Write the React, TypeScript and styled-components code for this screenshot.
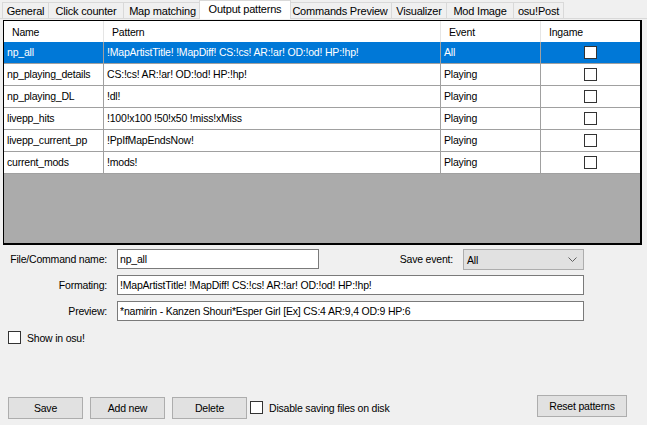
import React from 'react';
import styled, { createGlobalStyle } from 'styled-components';

const FONT = `font-family: "Liberation Sans", Arial, sans-serif; font-size: 10.5px; letter-spacing: -0.2px;`;

const Global = createGlobalStyle`
  html, body { margin: 0; padding: 0; background: #f0f0f0; }
  body { ${FONT} color: #000; }
  * { box-sizing: border-box; }
`;

const Window = styled.div`
  width: 647px;
  height: 425px;
  overflow: hidden;
  background: #f0f0f0;
  display: flex;
  flex-direction: column;
`;

const TabStrip = styled.div`
  display: flex;
  align-items: flex-end;
  height: 19px;
  padding-left: 3px;
  border-bottom: 1px solid #d9d9d9;
  flex: none;
`;

const Tab = styled.div<{ $w: number; $active?: boolean }>`
  position: relative;
  width: ${(p) => p.$w}px;
  height: ${(p) => (p.$active ? 19 : 16)}px;
  margin: ${(p) => (p.$active ? '0 -2px -1px -3px' : '0 0 0 -1px')};
  z-index: ${(p) => (p.$active ? 1 : 0)};
  border: 1px solid #d9d9d9;
  border-bottom: none;
  background: ${(p) => (p.$active ? '#ffffff' : '#f0f0f0')};
  display: flex;
  align-items: center;
  justify-content: center;
  padding-bottom: ${(p) => (p.$active ? 2 : 0)}px;
  font-size: 11px;
  white-space: nowrap;
`;

const Grid = styled.div`
  margin: 1px 0 0 3px;
  width: 639px;
  height: 225px;
  flex: none;
  border-top: 1px solid #000;
  border-left: 1px solid #000;
  border-right: 2px solid #000;
  border-bottom: 2px solid #000;
  background: #ababab;
  overflow: hidden;
`;

const COLS = '100px 337px 100px 99px';

const HeaderRow = styled.div`
  display: grid;
  grid-template-columns: ${COLS};
  height: 21px;
  background: #fff;
`;

const HeaderCell = styled.div<{ $last?: boolean }>`
  display: flex;
  align-items: center;
  padding-left: 8px;
  border-right: ${(p) => (p.$last ? 'none' : '1px solid #e5e5e5')};
`;

const Row = styled.div<{ $selected?: boolean }>`
  display: grid;
  grid-template-columns: ${COLS};
  height: 22px;
  background: ${(p) => (p.$selected ? '#0078d7' : '#fff')};
  color: ${(p) => (p.$selected ? '#fff' : '#000')};
`;

const Cell = styled.div<{ $last?: boolean; $center?: boolean }>`
  display: flex;
  align-items: center;
  justify-content: ${(p) => (p.$center ? 'center' : 'flex-start')};
  padding-left: ${(p) => (p.$center ? 0 : 3)}px;
  padding-bottom: 1px;
  border-bottom: 1px solid #a0a0a0;
  border-right: ${(p) => (p.$last ? 'none' : '1px solid #a0a0a0')};
  white-space: nowrap;
  overflow: hidden;
`;

const CheckBox = styled.span`
  display: inline-block;
  width: 13px;
  height: 13px;
  border: 1px solid #333;
  background: #fff;
  flex: none;
`;

const Form = styled.div`
  flex: 1;
  display: flex;
  flex-direction: column;
  padding: 4px 0 6px 3px;
`;

const FieldRow = styled.div<{ $top: number }>`
  display: flex;
  align-items: flex-start;
  height: 20px;
  margin-top: ${(p) => p.$top}px;
`;

const Label = styled.label<{ $w: number; $gap: number }>`
  width: ${(p) => p.$w}px;
  margin-right: ${(p) => p.$gap}px;
  height: 20px;
  line-height: 20px;
  text-align: right;
  white-space: nowrap;
  flex: none;
`;

const TextBox = styled.input<{ $w: number }>`
  width: ${(p) => p.$w}px;
  height: 20px;
  border: 1px solid #7a7a7a;
  background: #fff;
  padding: 0 2px;
  margin: 0;
  ${FONT}
  color: #000;
  outline: none;
  flex: none;
`;

const Select = styled.div`
  width: 121px;
  height: 21px;
  border: 1px solid #adadad;
  background: #e1e1e1;
  display: flex;
  align-items: center;
  justify-content: space-between;
  padding: 0 6px 0 3px;
  flex: none;
`;

const CheckRow = styled.div<{ $top: number; $left: number }>`
  display: flex;
  align-items: center;
  gap: 6px;
  margin-top: ${(p) => p.$top}px;
  margin-left: ${(p) => p.$left}px;
  height: 13px;
  white-space: nowrap;
`;

const ButtonBar = styled.div`
  margin-top: auto;
  display: flex;
  align-items: flex-start;
  padding-left: 5px;
  padding-right: 20px;
  gap: 7px;
`;

const Button = styled.button<{ $w: number; $raise?: number }>`
  width: ${(p) => p.$w}px;
  height: 22px;
  margin: ${(p) => -(p.$raise || 0)}px 0 0 0;
  padding: 0;
  border: 1px solid #adadad;
  background: #e1e1e1;
  ${FONT}
  color: #000;
  flex: none;
`;

const Spacer = styled.div`
  flex: 1;
`;

const Chevron = () => (
  <svg width="9" height="5" viewBox="0 0 9 5">
    <polyline points="0.5,0.5 4.5,4.5 8.5,0.5" fill="none" stroke="#606060" strokeWidth="1" />
  </svg>
);

const tabs: { name: string; w: number; active?: boolean }[] = [
  { name: 'General', w: 47 },
  { name: 'Click counter', w: 76 },
  { name: 'Map matching', w: 79 },
  { name: 'Output patterns', w: 92, active: true },
  { name: 'Commands Preview', w: 104 },
  { name: 'Visualizer', w: 56 },
  { name: 'Mod Image', w: 68 },
  { name: 'osu!Post', w: 51 },
];

const rows = [
  { name: 'np_all', pattern: '!MapArtistTitle! !MapDiff! CS:!cs! AR:!ar! OD:!od! HP:!hp!', event: 'All' },
  { name: 'np_playing_details', pattern: 'CS:!cs! AR:!ar! OD:!od! HP:!hp!', event: 'Playing' },
  { name: 'np_playing_DL', pattern: '!dl!', event: 'Playing' },
  { name: 'livepp_hits', pattern: '!100!x100 !50!x50 !miss!xMiss', event: 'Playing' },
  { name: 'livepp_current_pp', pattern: '!PpIfMapEndsNow!', event: 'Playing' },
  { name: 'current_mods', pattern: '!mods!', event: 'Playing' },
];

export default function App() {
  return (
    <Window>
      <Global />
      <TabStrip>
        {tabs.map((t) => (
          <Tab key={t.name} $w={t.w} $active={t.active}>
            {t.name}
          </Tab>
        ))}
      </TabStrip>
      <Grid>
        <HeaderRow>
          <HeaderCell>Name</HeaderCell>
          <HeaderCell>Pattern</HeaderCell>
          <HeaderCell>Event</HeaderCell>
          <HeaderCell $last>Ingame</HeaderCell>
        </HeaderRow>
        {rows.map((r, i) => (
          <Row key={r.name} $selected={i === 0}>
            <Cell>{r.name}</Cell>
            <Cell>{r.pattern}</Cell>
            <Cell>{r.event}</Cell>
            <Cell $last $center>
              <CheckBox />
            </Cell>
          </Row>
        ))}
      </Grid>
      <Form>
        <FieldRow $top={0}>
          <Label $w={104} $gap={10}>File/Command name:</Label>
          <TextBox $w={202} readOnly value="np_all" />
          <Label $w={134} $gap={10}>Save event:</Label>
          <Select>
            <span>All</span>
            <Chevron />
          </Select>
        </FieldRow>
        <FieldRow $top={6}>
          <Label $w={104} $gap={10}>Formating:</Label>
          <TextBox $w={467} readOnly value="!MapArtistTitle! !MapDiff! CS:!cs! AR:!ar! OD:!od! HP:!hp!" />
        </FieldRow>
        <FieldRow $top={6}>
          <Label $w={104} $gap={10}>Preview:</Label>
          <TextBox $w={467} readOnly value="*namirin - Kanzen Shouri*Esper Girl [Ex] CS:4 AR:9,4 OD:9 HP:6" />
        </FieldRow>
        <CheckRow $top={10} $left={5}>
          <CheckBox />
          <span>Show in osu!</span>
        </CheckRow>
        <ButtonBar>
          <Button $w={75}>Save</Button>
          <Button $w={75}>Add new</Button>
          <Button $w={75}>Delete</Button>
          <CheckRow $top={4} $left={-4}>
            <CheckBox />
            <span>Disable saving files on disk</span>
          </CheckRow>
          <Spacer />
          <Button $w={90} $raise={2}>Reset patterns</Button>
        </ButtonBar>
      </Form>
    </Window>
  );
}
